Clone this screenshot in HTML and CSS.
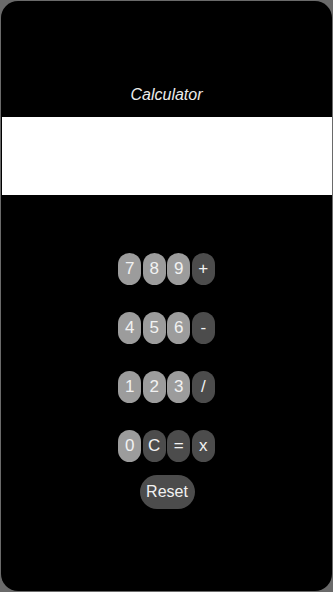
FILE: index.html
```html
<!DOCTYPE html>
<html>
<head>
<meta charset="utf-8">
<link rel="stylesheet" href="styles.css">
</head>
<body>
<div class="frame">
  <div class="header"><span class="title">Calculator</span></div>
  <div class="display"></div>
  <div class="keypad">
    <div class="row">
      <div class="key light">7</div><div class="key light">8</div><div class="key light">9</div><div class="key dark">+</div>
    </div>
    <div class="row">
      <div class="key light">4</div><div class="key light">5</div><div class="key light">6</div><div class="key dark">-</div>
    </div>
    <div class="row">
      <div class="key light">1</div><div class="key light">2</div><div class="key light">3</div><div class="key dark">/</div>
    </div>
    <div class="row">
      <div class="key light">0</div><div class="key dark">C</div><div class="key dark">=</div><div class="key dark">x</div>
    </div>
    <div class="reset">Reset</div>
  </div>
</div>
</body>
</html>
```
FILE: styles.css
```css
html, body {
  margin: 0;
  padding: 0;
  background: #6a6a6a;
}
body {
  width: 333px;
  height: 592px;
  overflow: hidden;
  font-family: "Liberation Sans", Arial, sans-serif;
}
.frame {
  margin: 1px;
  height: 590px;
  background: #000;
  border-radius: 17px;
  display: flex;
  flex-direction: column;
  overflow: hidden;
}
.header {
  height: 116px;
  display: flex;
  justify-content: center;
  align-items: flex-end;
  box-sizing: border-box;
  padding-bottom: 13px;
}
.title {
  font-style: italic;
  font-size: 16px;
  color: #ececec;
  line-height: 18px;
}
.display {
  height: 78px;
  background: #fff;
  margin-left: 1px;
}
.keypad {
  display: flex;
  flex-direction: column;
  align-items: center;
  padding-top: 58px;
  gap: 27px;
}
.row {
  display: flex;
  gap: 1.5px;
}
.key {
  width: 23px;
  height: 32px;
  border-radius: 11.5px;
  display: flex;
  align-items: center;
  justify-content: center;
  color: #f2f2f2;
  font-size: 17px;
}
.light { background: #9c9c9c; }
.dark { background: #4c4c4c; }
.reset {
  margin-top: -14px;
  width: 55px;
  height: 34px;
  border-radius: 17px;
  background: #4c4c4c;
  color: #f2f2f2;
  font-size: 16px;
  display: flex;
  align-items: center;
  justify-content: center;
  margin-left: 1px;
}
```
